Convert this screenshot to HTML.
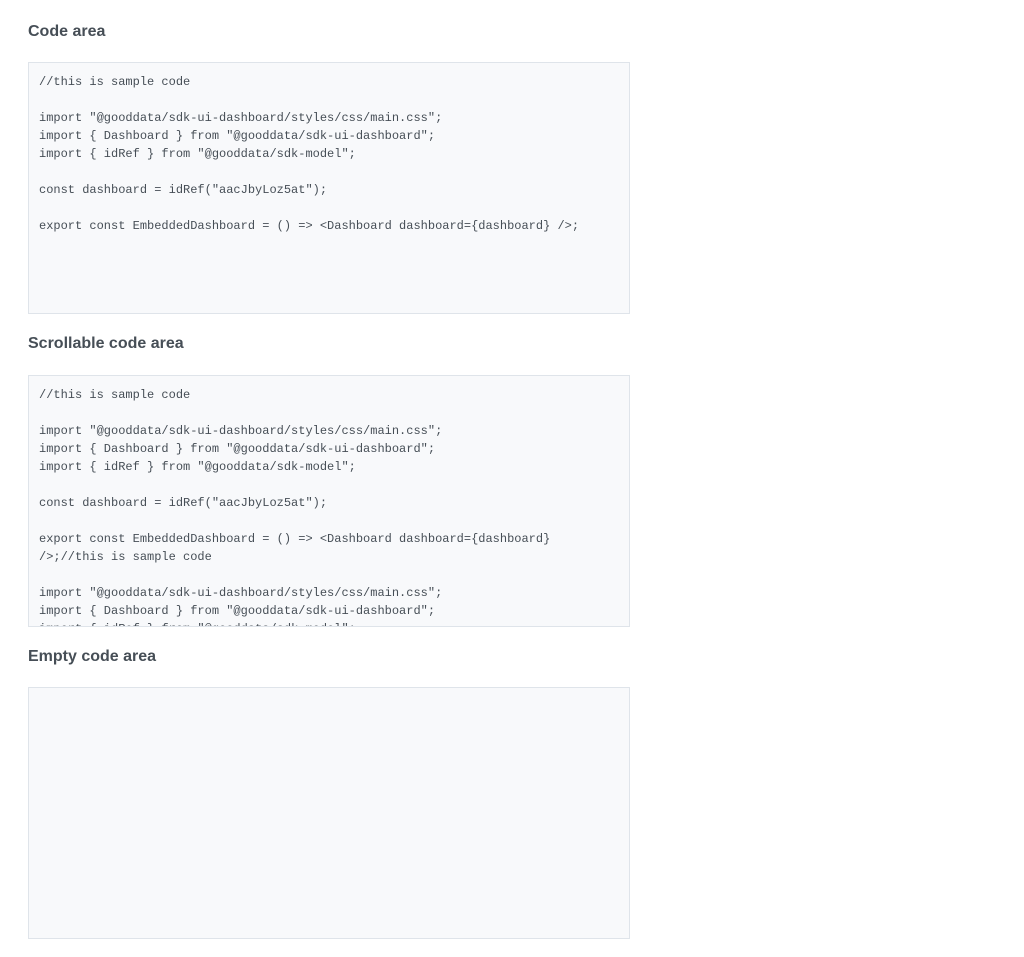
<!DOCTYPE html>
<html><head><meta charset="utf-8"><style>
html,body{margin:0;padding:0;background:#fff;width:1024px;height:957px;overflow:hidden}
h2{position:absolute;left:28px;margin:0;font:bold 16px/20px "Liberation Sans",sans-serif;color:#464e56}
.box{position:absolute;left:28px;width:600px;height:250px;background:#f8f9fb;border:1px solid #dfe4ea;overflow:hidden}
pre{margin:0;padding:10px 10px;font:12px/18px "Liberation Mono",monospace;color:#464e56;white-space:pre}
</style></head><body>
<h2 style="top:22px">Code area</h2>
<div class="box" style="top:62px"><pre>//this is sample code

import "@gooddata/sdk-ui-dashboard/styles/css/main.css";
import { Dashboard } from "@gooddata/sdk-ui-dashboard";
import { idRef } from "@gooddata/sdk-model";

const dashboard = idRef("aacJbyLoz5at");

export const EmbeddedDashboard = () =&gt; &lt;Dashboard dashboard={dashboard} /&gt;;</pre></div>
<h2 style="top:334px">Scrollable code area</h2>
<div class="box" style="top:375px"><pre>//this is sample code

import "@gooddata/sdk-ui-dashboard/styles/css/main.css";
import { Dashboard } from "@gooddata/sdk-ui-dashboard";
import { idRef } from "@gooddata/sdk-model";

const dashboard = idRef("aacJbyLoz5at");

export const EmbeddedDashboard = () =&gt; &lt;Dashboard dashboard={dashboard}
/&gt;;//this is sample code

import "@gooddata/sdk-ui-dashboard/styles/css/main.css";
import { Dashboard } from "@gooddata/sdk-ui-dashboard";
import { idRef } from "@gooddata/sdk-model";</pre></div>
<h2 style="top:647px">Empty code area</h2>
<div class="box" style="top:687px"></div>
</body></html>
